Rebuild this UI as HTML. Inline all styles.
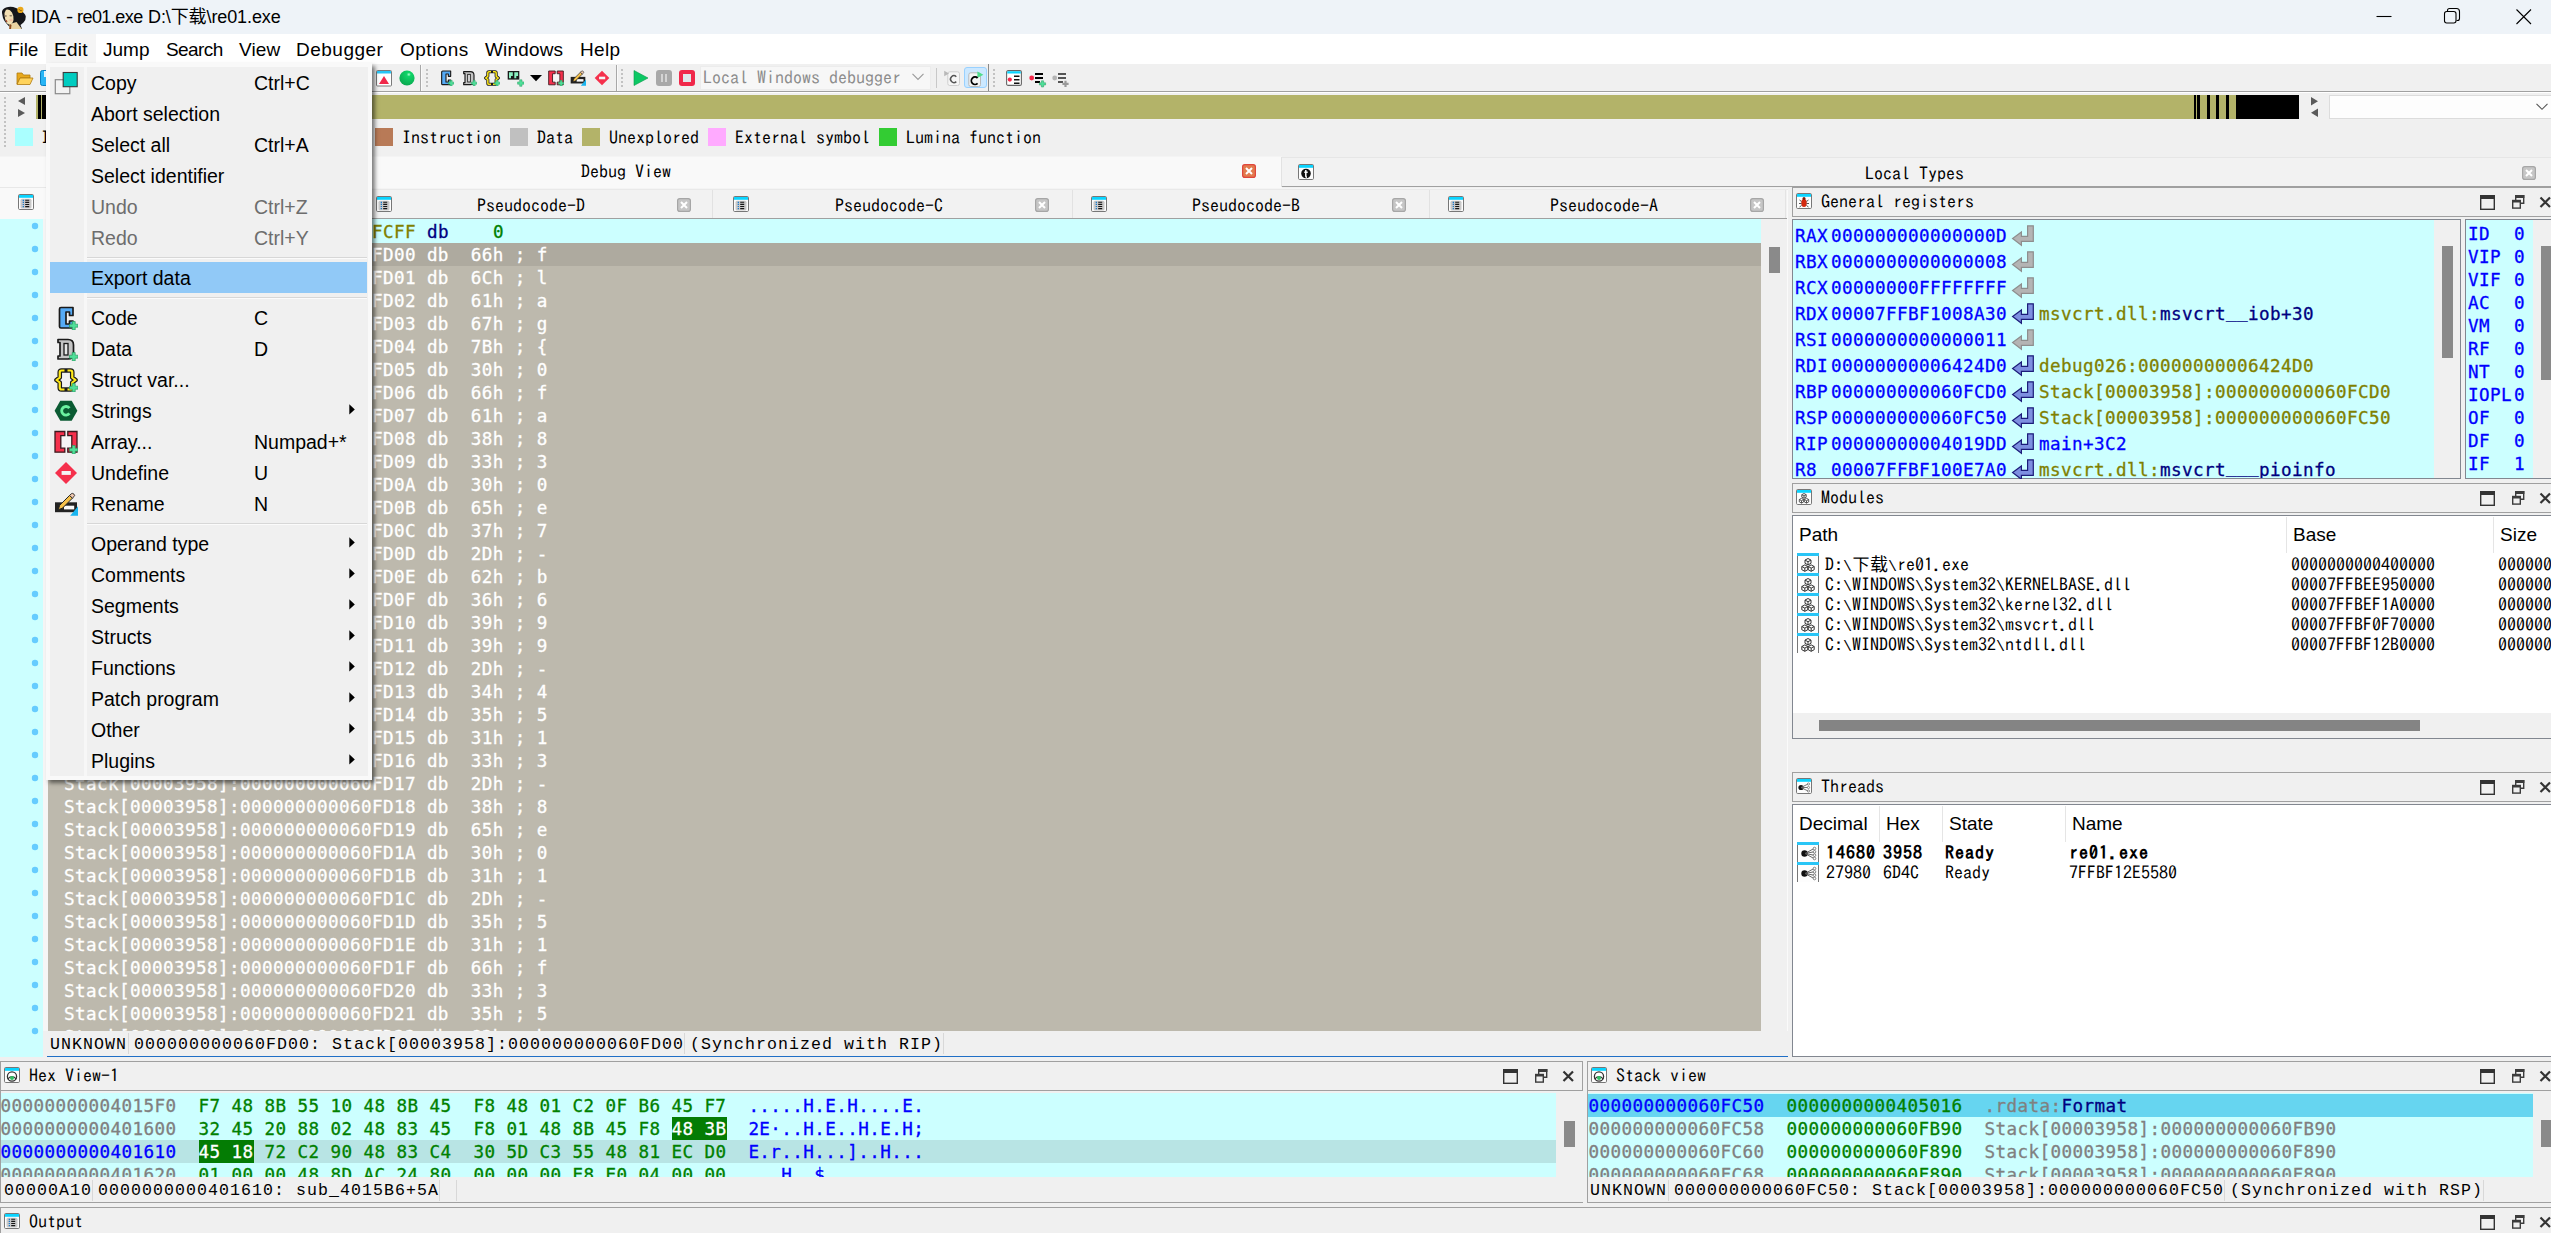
<!DOCTYPE html>
<html lang="zh"><head><meta charset="utf-8"><title>IDA - re01.exe</title>
<style>
html,body{margin:0;padding:0;}
body{width:2551px;height:1233px;overflow:hidden;background:#f0f0f0;position:relative;font-family:"Liberation Sans","Noto Sans CJK SC",sans-serif;}
div,svg{position:absolute;box-sizing:border-box;}
.t{white-space:pre;}
.ui{font-family:"Liberation Sans","Noto Sans CJK SC",sans-serif;color:#000;}
.ss{font-family:"IPAGothic","Liberation Mono","Noto Sans CJK SC",monospace;font-size:18px;line-height:22px;color:#000;}
.ss i{font-style:normal;font-family:"Liberation Mono",monospace;font-size:15px;display:inline-block;width:9px;}
.co{font-family:"DejaVu Sans Mono","Liberation Mono",monospace;font-size:17.6px;letter-spacing:0.404px;line-height:23px;-webkit-text-stroke:0.3px;}
.cr{font-family:"Liberation Mono",monospace;font-size:16.6px;letter-spacing:1.04px;line-height:22px;color:#000;}
</style></head>
<body>
<div style="left:0px;top:0px;width:2551px;height:34px;background:#eef3f8;"></div>
<svg style="left:0px;top:5px;" width="30" height="26" viewBox="0 0 30 26"><path d="M2 8Q1.500 4 6 2.500 11 0.800 16 3 19 4 21 6 25 8 25.800 11.500 26 15 23.500 17.500 21.500 19 20.500 20L22 24H12Q5 18 3 13Z" fill="#15161a"/><path d="M9.500 19L16.500 17 21.800 24H9.200Z" fill="#e9d2a2"/><path d="M9.200 24L9.800 18.500 11.500 20 11 24Z" fill="#8a4a20"/><path d="M6 4.800Q9.500 3.500 12 7.500 14 11 13.500 15 12.500 19.500 9 19.500 6.500 19 5.500 15.500 4.200 11 4.500 8Z" fill="#f1deb2"/><ellipse cx="10.800" cy="10.800" rx="1.500" ry=".8" fill="#8a7a6a"/><ellipse cx="5.800" cy="11" rx="1" ry=".7" fill="#7a6250"/><path d="M5.500 14.500Q7 15 7.500 16.500 6.500 17.500 6 16.500Z" fill="#a8402a"/><ellipse cx="11" cy="15" rx="1.800" ry="1.300" fill="#f0b8a0" opacity=".8"/><circle cx="20.400" cy="4.900" r="3.100" fill="#eaa81c"/><path d="M19 4.200Q20 6.200 21.800 5.600" stroke="#6a4a10" stroke-width=".7" fill="none"/></svg>
<div class="t ui" style="left:31px;top:4.800000000000001px;font-size:18px;line-height:24px;color:#000;letter-spacing:-.2px;">IDA</div>
<div class="t ui" style="left:66px;top:4.800000000000001px;font-size:18px;line-height:24px;color:#000;transform:scaleX(1.2);transform-origin:0 0;">-</div>
<div class="t ui" style="left:77px;top:4.800000000000001px;font-size:18px;line-height:24px;color:#000;letter-spacing:-.55px;">re01.exe</div>
<div class="t ui" style="left:148px;top:4.800000000000001px;font-size:18px;line-height:24px;color:#000;letter-spacing:-.1px;">D:\下载\re01.exe</div>
<svg style="left:2370px;top:4px;" width="170" height="26" viewBox="0 0 170 26"><g stroke="#000" stroke-width="1.1" fill="none"><path d="M6.5 12.5h15"/><rect x="74.5" y="7.5" width="11.5" height="11.5" rx="2.2"/><path d="M77.5 7.5v-1a2 2 0 0 1 2-2h7a3 3 0 0 1 3 3v7a2 2 0 0 1-2 2h-1"/><path d="M146.5 5.5l14.5 14.5M161 5.5l-14.5 14.5"/></g></svg>
<div style="left:0px;top:34px;width:2551px;height:30px;background:#ffffff;"></div>
<div style="left:46px;top:34px;width:50px;height:30px;background:#f5f5f5;"></div>
<div class="t ui" style="left:8px;top:37.5px;font-size:19px;line-height:24px;color:#000;letter-spacing:-0.1px;">File</div>
<div class="t ui" style="left:54px;top:37.5px;font-size:19px;line-height:24px;color:#000;letter-spacing:0.3px;">Edit</div>
<div class="t ui" style="left:103px;top:37.5px;font-size:19px;line-height:24px;color:#000;letter-spacing:0px;">Jump</div>
<div class="t ui" style="left:166px;top:37.5px;font-size:19px;line-height:24px;color:#000;letter-spacing:-0.6px;">Search</div>
<div class="t ui" style="left:239px;top:37.5px;font-size:19px;line-height:24px;color:#000;letter-spacing:0.15px;">View</div>
<div class="t ui" style="left:296px;top:37.5px;font-size:19px;line-height:24px;color:#000;letter-spacing:0.5px;">Debugger</div>
<div class="t ui" style="left:400px;top:37.5px;font-size:19px;line-height:24px;color:#000;letter-spacing:0.45px;">Options</div>
<div class="t ui" style="left:485px;top:37.5px;font-size:19px;line-height:24px;color:#000;letter-spacing:0.17px;">Windows</div>
<div class="t ui" style="left:580px;top:37.5px;font-size:19px;line-height:24px;color:#000;letter-spacing:0.3px;">Help</div>
<div style="left:0px;top:64px;width:2551px;height:28px;background:#f0f0f0;"></div>
<div style="left:0px;top:91px;width:2551px;height:1px;background:#a0a0a0;"></div>
<div style="left:0px;top:92px;width:2551px;height:1px;background:#ffffff;"></div>
<svg style="left:3px;top:68px;" width="4" height="20" viewBox="0 0 4 20"><rect x="1" y="1" width="2" height="2" fill="#c2c2c2"/><rect x="1" y="5" width="2" height="2" fill="#c2c2c2"/><rect x="1" y="9" width="2" height="2" fill="#c2c2c2"/><rect x="1" y="13" width="2" height="2" fill="#c2c2c2"/><rect x="1" y="17" width="2" height="2" fill="#c2c2c2"/></svg>
<svg style="left:425px;top:68px;" width="4" height="20" viewBox="0 0 4 20"><rect x="1" y="1" width="2" height="2" fill="#c2c2c2"/><rect x="1" y="5" width="2" height="2" fill="#c2c2c2"/><rect x="1" y="9" width="2" height="2" fill="#c2c2c2"/><rect x="1" y="13" width="2" height="2" fill="#c2c2c2"/><rect x="1" y="17" width="2" height="2" fill="#c2c2c2"/></svg>
<svg style="left:620px;top:68px;" width="4" height="20" viewBox="0 0 4 20"><rect x="1" y="1" width="2" height="2" fill="#c2c2c2"/><rect x="1" y="5" width="2" height="2" fill="#c2c2c2"/><rect x="1" y="9" width="2" height="2" fill="#c2c2c2"/><rect x="1" y="13" width="2" height="2" fill="#c2c2c2"/><rect x="1" y="17" width="2" height="2" fill="#c2c2c2"/></svg>
<svg style="left:992px;top:68px;" width="4" height="20" viewBox="0 0 4 20"><rect x="1" y="1" width="2" height="2" fill="#c2c2c2"/><rect x="1" y="5" width="2" height="2" fill="#c2c2c2"/><rect x="1" y="9" width="2" height="2" fill="#c2c2c2"/><rect x="1" y="13" width="2" height="2" fill="#c2c2c2"/><rect x="1" y="17" width="2" height="2" fill="#c2c2c2"/></svg>
<div style="left:420px;top:65px;width:1px;height:26px;background:#a8a8a8;"></div>
<div style="left:421px;top:65px;width:1px;height:26px;background:#fafafa;"></div>
<div style="left:616px;top:65px;width:1px;height:26px;background:#a8a8a8;"></div>
<div style="left:617px;top:65px;width:1px;height:26px;background:#fafafa;"></div>
<div style="left:988px;top:64px;width:1px;height:27px;background:#8a8a8a;"></div>
<svg style="left:16px;top:70px;" width="18" height="16" viewBox="0 0 18 16"><path d="M1 3h5l1.5 2H14v3H4L1 14z" fill="#e8a91d" stroke="#b07b10" stroke-width=".8"/><path d="M4 8h13l-3 6.5H1z" fill="#ffd35c" stroke="#b07b10" stroke-width=".8"/></svg>
<svg style="left:40px;top:70px;" width="16" height="16" viewBox="0 0 16 16"><rect x=".5" y=".5" width="15" height="15" rx="2" fill="#29b6f6" stroke="#0b7fc0"/><rect x="4" y="1" width="8" height="6" fill="#e8f6ff"/></svg>
<svg style="left:376px;top:70px;" width="16" height="17" viewBox="0 0 16 17"><rect x=".5" y=".5" width="15" height="15.5" rx="1" fill="#fff" stroke="#7a7a7a"/><rect x="1" y="1" width="14" height="2.5" fill="#29c5f6"/><path d="M8 6l5 8H3z" fill="#f0284a"/></svg>
<svg style="left:399px;top:70px;" width="16" height="16" viewBox="0 0 16 16"><defs><radialGradient id="gb" cx=".62" cy=".27" r=".75"><stop offset="0" stop-color="#b0ffd0"/><stop offset=".18" stop-color="#10d468"/><stop offset="1" stop-color="#0aa850"/></radialGradient></defs><circle cx="8" cy="8" r="7.6" fill="url(#gb)"/></svg>
<svg style="left:438px;top:70.1px;" width="16" height="16" viewBox="0 0 24 24"><path d="M7 1.500H19V9.500H15.500V6H12V18H15.500V15H19V22H7Q5.500 22 5.500 20.500V3Q5.500 1.500 7 1.500Z" fill="#55aaf5" stroke="#1a1a1a" stroke-width="1.700" stroke-linejoin="round"/><path d="M18.2 15.500h3v2.700h2.700v3h-2.700v2.700h-3v-2.700h-2.700v-3h2.700z" fill="#4fe09a" stroke="#2a9a60" stroke-width=".7"/></svg>
<svg style="left:460.7px;top:70.1px;" width="16" height="16" viewBox="0 0 24 24"><path d="M4 2.500H14Q19.500 2.500 19.500 8V16.500Q19.500 22 14 22H4V19H6V5.500H4Z" fill="#c4c4c4" stroke="#1a1a1a" stroke-width="1.700" stroke-linejoin="round"/><rect x="10" y="6.500" width="4" height="11.500" fill="#e6e6e6" stroke="#1a1a1a" stroke-width="1.300"/><path d="M18.2 15.500h3v2.700h2.700v3h-2.700v2.700h-3v-2.700h-2.700v-3h2.700z" fill="#4fe09a" stroke="#2a9a60" stroke-width=".7"/></svg>
<svg style="left:483.6px;top:70.1px;" width="16" height="16" viewBox="0 0 24 24"><g fill="none" stroke-linejoin="round"><path id="sb" d="M10.500 2.500H7.500Q5.750 2.500 5.750 4.200V9.500L2.500 12 5.750 14.500V19.800Q5.750 21.500 7.500 21.500H10.500M13.500 2.500H16.500Q18.250 2.500 18.250 4.200V9.500L21.500 12 18.250 14.500V19.800Q18.250 21.500 16.500 21.500H13.500" stroke="#1a1a1a" stroke-width="4.600" stroke-linecap="square"/><path d="M10.500 2.500H7.500Q5.750 2.500 5.750 4.200V9.500L2.500 12 5.750 14.500V19.800Q5.750 21.500 7.500 21.500H10.500M13.500 2.500H16.500Q18.250 2.500 18.250 4.200V9.500L21.500 12 18.250 14.500V19.800Q18.250 21.500 16.500 21.500H13.500" stroke="#ffe81a" stroke-width="2.200"/></g><path d="M18.2 15.500h3v2.700h2.700v3h-2.700v2.700h-3v-2.700h-2.700v-3h2.700z" fill="#4fe09a" stroke="#2a9a60" stroke-width=".7"/></svg>
<svg style="left:507px;top:70px;" width="17" height="17" viewBox="0 0 17 17"><rect x=".7" y="1" width="11.600" height="8.600" fill="#1a1a1a"/><path d="M2 2.300h3.800v3.700H4v2.200H2zM7.300 2.300h3.800v3.700H9.300v2.200H7.300z" fill="#8af0c0"/><path d="M12.700 9.800h2.300v2.100h2.100v2.300h-2.100v2.100h-2.300v-2.100h-2.100v-2.300h2.100z" fill="#4fe09a" stroke="#2a9a60" stroke-width=".5"/></svg>
<svg style="left:529.5px;top:75px;" width="12" height="7" viewBox="0 0 12 7"><path d="M0 0h12L6 6.200z" fill="#000"/></svg>
<svg style="left:547.9px;top:70.1px;" width="16" height="16" viewBox="0 0 24 24"><rect x="6.800" y="5.600" width="11" height="12.600" fill="#f6f6f6"/><path d="M1 1.500H10.800V5.600H6.800V18.200H10.800V22.200H1ZM23 1.500H13.800V5.600H17.800V18.200H13.800V22.200H23Z" fill="#f5304c" stroke="#3a1a1e" stroke-width="1.300"/><path d="M18.2 15.500h3v2.700h2.700v3h-2.700v2.700h-3v-2.700h-2.700v-3h2.700z" fill="#4fe09a" stroke="#2a9a60" stroke-width=".7"/></svg>
<svg style="left:570.3px;top:69.6px;" width="16" height="16" viewBox="0 0 24 24"><rect x="1" y="10.300" width="22" height="9.900" fill="#222"/><rect x="10" y="13.700" width="10.200" height="3.700" fill="#fafafa"/><path d="M24 14.300V23.700H16.200Z" fill="#19b5f0"/><path d="M4.300 17.700L5.600 13.400 15.600 3.400 18.400 6.200 8.400 16.200Z" fill="#f5c04a" stroke="#222" stroke-width="1"/><path d="M15.600 3.400L17.200 1.800Q18.700 .8 20 2.200 21.300 3.600 20 4.600L18.400 6.200Z" fill="#f0c8b0" stroke="#222" stroke-width=".9"/></svg>
<svg style="left:594.1px;top:70.1px;" width="16" height="16" viewBox="0 0 24 24"><path d="M12 1L23 12 12 23 1 12Z" fill="#f5304c"/><rect x="7.600" y="10" width="9.200" height="3.900" fill="#f4f4f4"/></svg>
<svg style="left:633px;top:70px;" width="16" height="17" viewBox="0 0 16 17"><path d="M1 .5L15 8 1 15.500z" fill="#0cc864" stroke="#0a9a4c" stroke-width=".6"/></svg>
<svg style="left:656px;top:70px;" width="16" height="16" viewBox="0 0 16 16"><rect x="0" y="0" width="16" height="16" rx="3" fill="#a8a8a8"/><rect x="5" y="4" width="2" height="8" fill="#d4d4d4"/><rect x="9" y="4" width="2" height="8" fill="#d4d4d4"/></svg>
<svg style="left:679px;top:70px;" width="16" height="16" viewBox="0 0 16 16"><rect x="0" y="0" width="16" height="16" rx="3" fill="#f0284a"/><rect x="4" y="4" width="8" height="8" fill="#dfe7ea"/></svg>
<div style="left:700px;top:66px;width:231px;height:24px;background:#f7f7f7;border:1px solid #ececec;"></div>
<div class="t ss" style="left:703px;top:66px;color:#8c8c8c;">Local Windows debugger</div>
<svg style="left:912px;top:73px;" width="12" height="8" viewBox="0 0 12 8"><path d="M.5 .8L6 6.500 11.500 .8" fill="none" stroke="#9a9a9a" stroke-width="1.100"/></svg>
<div style="left:936px;top:68px;width:1px;height:20px;background:#c8c8c8;"></div>
<svg style="left:943px;top:70px;" width="18" height="17" viewBox="0 0 18 17"><rect x="4.800" y="1.800" width="11.700" height="13.700" rx="2" fill="#f6f6f6" stroke="#cfcfcf"/><path d="M1.200 .8l4.800 2.700-4.800 2.700z" fill="#b8b8b8"/><path d="M13.300 6.700A3.400 3.400 0 1 0 13.300 11.600" fill="none" stroke="#555" stroke-width="1.500"/></svg>
<div style="left:964px;top:67px;width:23px;height:21px;background:#cce8ff;border:1px solid #99d1ff;border-radius:3px;"></div>
<svg style="left:967px;top:70px;" width="18" height="17" viewBox="0 0 18 17"><rect x="1.800" y="2.800" width="11.700" height="13.700" rx="2" fill="#f4f4f4" stroke="#b8b8b8"/><path d="M10.400 1.500l6 3.200-6 3.300z" fill="#4fdd8c"/><path d="M10.600 8A3.700 3.700 0 1 0 10.600 13.400" fill="none" stroke="#000" stroke-width="1.800"/></svg>
<svg style="left:1006px;top:70px;" width="16" height="16" viewBox="0 0 16 16"><rect x=".6" y=".6" width="14.800" height="14.800" rx="1.500" fill="#fff" stroke="#666" stroke-width="1.100"/><path d="M1.200 3.600V2Q1.200 1.200 2 1.200H14Q14.800 1.200 14.800 2V3.600Z" fill="#0ad4ff"/><circle cx="3.800" cy="9.600" r="2.100" fill="#f5284a"/><path d="M8 6.300h5.500M8 9.800h5.500M8 13.200h5.500" stroke="#111" stroke-width="1.600"/></svg>
<svg style="left:1029px;top:70px;" width="18" height="18" viewBox="0 0 18 18"><circle cx="2.700" cy="8" r="2.400" fill="#f5284a"/><path d="M6 4h8M6 8h8M6 12h5" stroke="#000" stroke-width="1.800"/><path d="M12.400 10.800h2.200v2h2v2.200h-2v2h-2.200v-2h-2v-2.200h2z" fill="#4fe09a" stroke="#2a9a60" stroke-width=".5"/></svg>
<svg style="left:1052px;top:70px;" width="18" height="18" viewBox="0 0 18 18"><circle cx="2.700" cy="8" r="2.400" fill="#b4b4b4"/><path d="M6 4h8M6 8h8M6 12h5" stroke="#555" stroke-width="1.800"/><path d="M12.400 10.800h2.200v2h2v2.200h-2v2h-2.200v-2h-2v-2.200h2z" fill="#9a9a9a"/></svg>
<svg style="left:3px;top:96px;" width="4" height="52" viewBox="0 0 4 52"><rect x="1" y="1" width="2" height="2" fill="#c2c2c2"/><rect x="1" y="5" width="2" height="2" fill="#c2c2c2"/><rect x="1" y="9" width="2" height="2" fill="#c2c2c2"/><rect x="1" y="13" width="2" height="2" fill="#c2c2c2"/><rect x="1" y="17" width="2" height="2" fill="#c2c2c2"/><rect x="1" y="21" width="2" height="2" fill="#c2c2c2"/><rect x="1" y="25" width="2" height="2" fill="#c2c2c2"/><rect x="1" y="29" width="2" height="2" fill="#c2c2c2"/><rect x="1" y="33" width="2" height="2" fill="#c2c2c2"/><rect x="1" y="37" width="2" height="2" fill="#c2c2c2"/><rect x="1" y="41" width="2" height="2" fill="#c2c2c2"/><rect x="1" y="45" width="2" height="2" fill="#c2c2c2"/><rect x="1" y="49" width="2" height="2" fill="#c2c2c2"/></svg>
<svg style="left:17px;top:96px;" width="10" height="23" viewBox="0 0 10 23"><path d="M8 1v8L1 5zM1 13v8l7-4z" fill="#5a5a5a"/></svg>
<div style="left:36px;top:95px;width:2263px;height:24px;background:#b3b369;"></div>
<div style="left:38px;top:95px;width:3px;height:24px;background:#000;"></div>
<div style="left:42px;top:95px;width:4px;height:24px;background:#000;"></div>
<div style="left:2194px;top:95px;width:2px;height:24px;background:#000;"></div>
<div style="left:2197px;top:95px;width:3px;height:24px;background:#000;"></div>
<div style="left:2207px;top:95px;width:3px;height:24px;background:#000;"></div>
<div style="left:2216px;top:95px;width:3px;height:24px;background:#000;"></div>
<div style="left:2226px;top:95px;width:3px;height:24px;background:#000;"></div>
<div style="left:2236px;top:95px;width:63px;height:24px;background:#000;"></div>
<svg style="left:2310px;top:96px;" width="9" height="23" viewBox="0 0 9 23"><path d="M1 1v8.500L8 5.200zM8 12.500V21L1 16.700z" fill="#5a5a5a"/></svg>
<div style="left:2329px;top:95px;width:230px;height:24px;background:#fdfdfd;border:1px solid #dcdcdc;"></div>
<svg style="left:2536px;top:103px;" width="12" height="8" viewBox="0 0 12 8"><path d="M.5 .8L6 6.300 11.500 .8" fill="none" stroke="#555" stroke-width="1.100"/></svg>
<div style="left:15px;top:128px;width:18px;height:18px;background:#aaffff;"></div>
<div class="t ss" style="left:41px;top:126px;">I</div>
<div style="left:375px;top:128px;width:18px;height:18px;background:#b87a57;"></div>
<div class="t ss" style="left:402px;top:126px;">Instruction</div>
<div style="left:510px;top:128px;width:18px;height:18px;background:#c0c0c0;"></div>
<div class="t ss" style="left:537px;top:126px;">Data</div>
<div style="left:582px;top:128px;width:18px;height:18px;background:#b3b369;"></div>
<div class="t ss" style="left:609px;top:126px;">Unexplored</div>
<div style="left:708px;top:128px;width:18px;height:18px;background:#ffaaff;"></div>
<div class="t ss" style="left:735px;top:126px;">External symbol</div>
<div style="left:879px;top:128px;width:18px;height:18px;background:#33cc33;"></div>
<div class="t ss" style="left:906px;top:126px;">Lumina function</div>
<div style="left:0px;top:156px;width:1282px;height:32px;background:#f9f9f9;"></div>
<div style="left:0px;top:156px;width:1282px;height:1px;background:#f4f4f4;"></div>
<div style="left:1282px;top:158px;width:1269px;height:28px;background:#f2f2f2;"></div>
<div style="left:1282px;top:157px;width:1269px;height:1px;background:#e6e6e6;"></div>
<div style="left:1282px;top:186px;width:1269px;height:1px;background:#a0a0a0;"></div>
<div style="left:1281px;top:157px;width:1px;height:30px;background:#e2e2e2;"></div>
<div class="t ss" style="left:581px;top:160px;">Debug View</div>
<svg style="left:1242px;top:164px;" width="14" height="14" viewBox="0 0 14 14"><rect x=".6" y=".6" width="12.800" height="12.800" rx="2.200" fill="#e27b4e" stroke="#e0463c" stroke-width="1.200"/><path d="M4 4l6 6M10 4l-6 6" stroke="#fff" stroke-width="2"/></svg>
<svg style="left:1298px;top:164px;" width="16" height="16" viewBox="0 0 16 16"><rect x=".5" y=".5" width="15" height="15" rx="1.200" fill="#fdfdfd" stroke="#777"/><path d="M1 3.800V1H15V3.800Z" fill="#0ad4ff"/><circle cx="8" cy="9.500" r="4.800" fill="#111"/><path d="M7.800 6v6.300q0 .9 1.200 .9M6.300 8.200h3.400" stroke="#fff" stroke-width="1.500" fill="none"/></svg>
<div class="t ss" style="left:1865px;top:162px;">Local Types</div>
<svg style="left:2522px;top:166px;" width="14" height="14" viewBox="0 0 14 14"><rect x=".6" y=".6" width="12.800" height="12.800" rx="2.200" fill="#c6c6c6" stroke="#a6a6a6" stroke-width="1.200"/><path d="M4 4l6 6M10 4l-6 6" stroke="#fff" stroke-width="2"/></svg>
<div style="left:0px;top:188px;width:1788px;height:2px;background:#f4f4f4;"></div>
<div style="left:0px;top:189px;width:1788px;height:1px;background:#e9e9e9;"></div>
<div style="left:0px;top:190px;width:1788px;height:28px;background:#f2f2f2;"></div>
<div style="left:0px;top:218px;width:1788px;height:1px;background:#a0a0a0;"></div>
<div style="left:0px;top:188px;width:355px;height:31px;background:#f9f9f9;"></div>
<div style="left:0px;top:187px;width:355px;height:1px;background:#e8e8e8;"></div>
<svg style="left:18px;top:194px;" width="16" height="16" viewBox="0 0 16 16"><rect x=".5" y=".5" width="15" height="15" rx="1.200" fill="#fdfdfd" stroke="#777"/><path d="M1 3.800V1H15V3.800Z" fill="#0ad4ff"/><rect x="2.500" y="4.800" width="11" height="9.700" rx="1.500" fill="#c9c9c9"/><path d="M7.200 6.300h4M7.200 8.400h4M7.200 10.500h4M7.200 12.600h4" stroke="#161616" stroke-width="1.100"/><path d="M4.700 6.300h1.300M4.700 8.400h1.300M4.700 10.500h1.300M4.700 12.600h1.300" stroke="#1a7acc" stroke-width="1.200"/></svg>
<div style="left:355px;top:190px;width:1px;height:28px;background:#e2e2e2;"></div>
<svg style="left:376px;top:196px;" width="16" height="16" viewBox="0 0 16 16"><rect x=".5" y=".5" width="15" height="15" rx="1.200" fill="#fdfdfd" stroke="#777"/><path d="M1 3.800V1H15V3.800Z" fill="#0ad4ff"/><rect x="2.500" y="4.800" width="11" height="9.700" rx="1.500" fill="#c9c9c9"/><path d="M7.200 6.300h4M7.200 8.400h4M7.200 10.500h4M7.200 12.600h4" stroke="#161616" stroke-width="1.100"/><path d="M4.700 6.300h1.300M4.700 8.400h1.300M4.700 10.500h1.300M4.700 12.600h1.300" stroke="#1a7acc" stroke-width="1.200"/></svg>
<div class="t ss" style="left:477px;top:194px;">Pseudocode-D</div>
<svg style="left:677px;top:198px;" width="14" height="14" viewBox="0 0 14 14"><rect x=".6" y=".6" width="12.800" height="12.800" rx="2.200" fill="#c6c6c6" stroke="#a6a6a6" stroke-width="1.200"/><path d="M4 4l6 6M10 4l-6 6" stroke="#fff" stroke-width="2"/></svg>
<div style="left:712px;top:190px;width:1px;height:28px;background:#e2e2e2;"></div>
<svg style="left:733px;top:196px;" width="16" height="16" viewBox="0 0 16 16"><rect x=".5" y=".5" width="15" height="15" rx="1.200" fill="#fdfdfd" stroke="#777"/><path d="M1 3.800V1H15V3.800Z" fill="#0ad4ff"/><rect x="2.500" y="4.800" width="11" height="9.700" rx="1.500" fill="#c9c9c9"/><path d="M7.200 6.300h4M7.200 8.400h4M7.200 10.500h4M7.200 12.600h4" stroke="#161616" stroke-width="1.100"/><path d="M4.700 6.300h1.300M4.700 8.400h1.300M4.700 10.500h1.300M4.700 12.600h1.300" stroke="#1a7acc" stroke-width="1.200"/></svg>
<div class="t ss" style="left:835px;top:194px;">Pseudocode-C</div>
<svg style="left:1035px;top:198px;" width="14" height="14" viewBox="0 0 14 14"><rect x=".6" y=".6" width="12.800" height="12.800" rx="2.200" fill="#c6c6c6" stroke="#a6a6a6" stroke-width="1.200"/><path d="M4 4l6 6M10 4l-6 6" stroke="#fff" stroke-width="2"/></svg>
<div style="left:1072px;top:190px;width:1px;height:28px;background:#e2e2e2;"></div>
<svg style="left:1091px;top:196px;" width="16" height="16" viewBox="0 0 16 16"><rect x=".5" y=".5" width="15" height="15" rx="1.200" fill="#fdfdfd" stroke="#777"/><path d="M1 3.800V1H15V3.800Z" fill="#0ad4ff"/><rect x="2.500" y="4.800" width="11" height="9.700" rx="1.500" fill="#c9c9c9"/><path d="M7.200 6.300h4M7.200 8.400h4M7.200 10.500h4M7.200 12.600h4" stroke="#161616" stroke-width="1.100"/><path d="M4.700 6.300h1.300M4.700 8.400h1.300M4.700 10.500h1.300M4.700 12.600h1.300" stroke="#1a7acc" stroke-width="1.200"/></svg>
<div class="t ss" style="left:1192px;top:194px;">Pseudocode-B</div>
<svg style="left:1392px;top:198px;" width="14" height="14" viewBox="0 0 14 14"><rect x=".6" y=".6" width="12.800" height="12.800" rx="2.200" fill="#c6c6c6" stroke="#a6a6a6" stroke-width="1.200"/><path d="M4 4l6 6M10 4l-6 6" stroke="#fff" stroke-width="2"/></svg>
<div style="left:1429px;top:190px;width:1px;height:28px;background:#e2e2e2;"></div>
<svg style="left:1448px;top:196px;" width="16" height="16" viewBox="0 0 16 16"><rect x=".5" y=".5" width="15" height="15" rx="1.200" fill="#fdfdfd" stroke="#777"/><path d="M1 3.800V1H15V3.800Z" fill="#0ad4ff"/><rect x="2.500" y="4.800" width="11" height="9.700" rx="1.500" fill="#c9c9c9"/><path d="M7.200 6.300h4M7.200 8.400h4M7.200 10.500h4M7.200 12.600h4" stroke="#161616" stroke-width="1.100"/><path d="M4.700 6.300h1.300M4.700 8.400h1.300M4.700 10.500h1.300M4.700 12.600h1.300" stroke="#1a7acc" stroke-width="1.200"/></svg>
<div class="t ss" style="left:1550px;top:194px;">Pseudocode-A</div>
<svg style="left:1750px;top:198px;" width="14" height="14" viewBox="0 0 14 14"><rect x=".6" y=".6" width="12.800" height="12.800" rx="2.200" fill="#c6c6c6" stroke="#a6a6a6" stroke-width="1.200"/><path d="M4 4l6 6M10 4l-6 6" stroke="#fff" stroke-width="2"/></svg>
<div style="left:1785px;top:190px;width:1px;height:28px;background:#e4e4e4;"></div>
<div style="left:0px;top:219px;width:43px;height:838px;background:#ccffff;"></div>
<div style="left:43px;top:219px;width:5px;height:812px;background:#f6f6f6;"></div>
<div style="left:48px;top:219px;width:1713px;height:24px;background:#ccffff;"></div>
<div style="left:48px;top:243px;width:1713px;height:23px;background:#aeaa9f;"></div>
<div style="left:48px;top:266px;width:1713px;height:765px;background:#bdb9ad;"></div>
<div style="left:1761px;top:219px;width:27px;height:812px;background:#f0f0f0;"></div>
<div style="left:1787px;top:190px;width:1px;height:866px;background:#fafafa;"></div>
<div style="left:1769px;top:247px;width:11px;height:26px;background:#8a8a8a;"></div>
<svg style="left:31px;top:218px;" width="8" height="838" viewBox="0 0 8 838"><circle cx="4" cy="8" r="3.200" fill="#66ccff"/><circle cx="4" cy="31" r="3.200" fill="#66ccff"/><circle cx="4" cy="54" r="3.200" fill="#66ccff"/><circle cx="4" cy="77" r="3.200" fill="#66ccff"/><circle cx="4" cy="100" r="3.200" fill="#66ccff"/><circle cx="4" cy="123" r="3.200" fill="#66ccff"/><circle cx="4" cy="146" r="3.200" fill="#66ccff"/><circle cx="4" cy="169" r="3.200" fill="#66ccff"/><circle cx="4" cy="192" r="3.200" fill="#66ccff"/><circle cx="4" cy="215" r="3.200" fill="#66ccff"/><circle cx="4" cy="238" r="3.200" fill="#66ccff"/><circle cx="4" cy="261" r="3.200" fill="#66ccff"/><circle cx="4" cy="284" r="3.200" fill="#66ccff"/><circle cx="4" cy="307" r="3.200" fill="#66ccff"/><circle cx="4" cy="330" r="3.200" fill="#66ccff"/><circle cx="4" cy="353" r="3.200" fill="#66ccff"/><circle cx="4" cy="376" r="3.200" fill="#66ccff"/><circle cx="4" cy="399" r="3.200" fill="#66ccff"/><circle cx="4" cy="422" r="3.200" fill="#66ccff"/><circle cx="4" cy="445" r="3.200" fill="#66ccff"/><circle cx="4" cy="468" r="3.200" fill="#66ccff"/><circle cx="4" cy="491" r="3.200" fill="#66ccff"/><circle cx="4" cy="514" r="3.200" fill="#66ccff"/><circle cx="4" cy="537" r="3.200" fill="#66ccff"/><circle cx="4" cy="560" r="3.200" fill="#66ccff"/><circle cx="4" cy="583" r="3.200" fill="#66ccff"/><circle cx="4" cy="606" r="3.200" fill="#66ccff"/><circle cx="4" cy="629" r="3.200" fill="#66ccff"/><circle cx="4" cy="652" r="3.200" fill="#66ccff"/><circle cx="4" cy="675" r="3.200" fill="#66ccff"/><circle cx="4" cy="698" r="3.200" fill="#66ccff"/><circle cx="4" cy="721" r="3.200" fill="#66ccff"/><circle cx="4" cy="744" r="3.200" fill="#66ccff"/><circle cx="4" cy="767" r="3.200" fill="#66ccff"/><circle cx="4" cy="790" r="3.200" fill="#66ccff"/><circle cx="4" cy="813" r="3.200" fill="#66ccff"/></svg>
<div class="t co" style="left:64px;top:221px;"><span style="color:#808000">Stack[00003958]:000000000060FCFF</span> <span style="color:#000080">db</span>    <span style="color:#008000">0</span></div>
<div class="t co" style="left:64px;top:244px;height:23px;overflow:hidden;color:#ffffff;">Stack[00003958]:000000000060FD00 db  66h ; f</div>
<div class="t co" style="left:64px;top:267px;height:23px;overflow:hidden;color:#ffffff;">Stack[00003958]:000000000060FD01 db  6Ch ; l</div>
<div class="t co" style="left:64px;top:290px;height:23px;overflow:hidden;color:#ffffff;">Stack[00003958]:000000000060FD02 db  61h ; a</div>
<div class="t co" style="left:64px;top:313px;height:23px;overflow:hidden;color:#ffffff;">Stack[00003958]:000000000060FD03 db  67h ; g</div>
<div class="t co" style="left:64px;top:336px;height:23px;overflow:hidden;color:#ffffff;">Stack[00003958]:000000000060FD04 db  7Bh ; {</div>
<div class="t co" style="left:64px;top:359px;height:23px;overflow:hidden;color:#ffffff;">Stack[00003958]:000000000060FD05 db  30h ; 0</div>
<div class="t co" style="left:64px;top:382px;height:23px;overflow:hidden;color:#ffffff;">Stack[00003958]:000000000060FD06 db  66h ; f</div>
<div class="t co" style="left:64px;top:405px;height:23px;overflow:hidden;color:#ffffff;">Stack[00003958]:000000000060FD07 db  61h ; a</div>
<div class="t co" style="left:64px;top:428px;height:23px;overflow:hidden;color:#ffffff;">Stack[00003958]:000000000060FD08 db  38h ; 8</div>
<div class="t co" style="left:64px;top:451px;height:23px;overflow:hidden;color:#ffffff;">Stack[00003958]:000000000060FD09 db  33h ; 3</div>
<div class="t co" style="left:64px;top:474px;height:23px;overflow:hidden;color:#ffffff;">Stack[00003958]:000000000060FD0A db  30h ; 0</div>
<div class="t co" style="left:64px;top:497px;height:23px;overflow:hidden;color:#ffffff;">Stack[00003958]:000000000060FD0B db  65h ; e</div>
<div class="t co" style="left:64px;top:520px;height:23px;overflow:hidden;color:#ffffff;">Stack[00003958]:000000000060FD0C db  37h ; 7</div>
<div class="t co" style="left:64px;top:543px;height:23px;overflow:hidden;color:#ffffff;">Stack[00003958]:000000000060FD0D db  2Dh ; -</div>
<div class="t co" style="left:64px;top:566px;height:23px;overflow:hidden;color:#ffffff;">Stack[00003958]:000000000060FD0E db  62h ; b</div>
<div class="t co" style="left:64px;top:589px;height:23px;overflow:hidden;color:#ffffff;">Stack[00003958]:000000000060FD0F db  36h ; 6</div>
<div class="t co" style="left:64px;top:612px;height:23px;overflow:hidden;color:#ffffff;">Stack[00003958]:000000000060FD10 db  39h ; 9</div>
<div class="t co" style="left:64px;top:635px;height:23px;overflow:hidden;color:#ffffff;">Stack[00003958]:000000000060FD11 db  39h ; 9</div>
<div class="t co" style="left:64px;top:658px;height:23px;overflow:hidden;color:#ffffff;">Stack[00003958]:000000000060FD12 db  2Dh ; -</div>
<div class="t co" style="left:64px;top:681px;height:23px;overflow:hidden;color:#ffffff;">Stack[00003958]:000000000060FD13 db  34h ; 4</div>
<div class="t co" style="left:64px;top:704px;height:23px;overflow:hidden;color:#ffffff;">Stack[00003958]:000000000060FD14 db  35h ; 5</div>
<div class="t co" style="left:64px;top:727px;height:23px;overflow:hidden;color:#ffffff;">Stack[00003958]:000000000060FD15 db  31h ; 1</div>
<div class="t co" style="left:64px;top:750px;height:23px;overflow:hidden;color:#ffffff;">Stack[00003958]:000000000060FD16 db  33h ; 3</div>
<div class="t co" style="left:64px;top:773px;height:23px;overflow:hidden;color:#ffffff;">Stack[00003958]:000000000060FD17 db  2Dh ; -</div>
<div class="t co" style="left:64px;top:796px;height:23px;overflow:hidden;color:#ffffff;">Stack[00003958]:000000000060FD18 db  38h ; 8</div>
<div class="t co" style="left:64px;top:819px;height:23px;overflow:hidden;color:#ffffff;">Stack[00003958]:000000000060FD19 db  65h ; e</div>
<div class="t co" style="left:64px;top:842px;height:23px;overflow:hidden;color:#ffffff;">Stack[00003958]:000000000060FD1A db  30h ; 0</div>
<div class="t co" style="left:64px;top:865px;height:23px;overflow:hidden;color:#ffffff;">Stack[00003958]:000000000060FD1B db  31h ; 1</div>
<div class="t co" style="left:64px;top:888px;height:23px;overflow:hidden;color:#ffffff;">Stack[00003958]:000000000060FD1C db  2Dh ; -</div>
<div class="t co" style="left:64px;top:911px;height:23px;overflow:hidden;color:#ffffff;">Stack[00003958]:000000000060FD1D db  35h ; 5</div>
<div class="t co" style="left:64px;top:934px;height:23px;overflow:hidden;color:#ffffff;">Stack[00003958]:000000000060FD1E db  31h ; 1</div>
<div class="t co" style="left:64px;top:957px;height:23px;overflow:hidden;color:#ffffff;">Stack[00003958]:000000000060FD1F db  66h ; f</div>
<div class="t co" style="left:64px;top:980px;height:23px;overflow:hidden;color:#ffffff;">Stack[00003958]:000000000060FD20 db  33h ; 3</div>
<div class="t co" style="left:64px;top:1003px;height:23px;overflow:hidden;color:#ffffff;">Stack[00003958]:000000000060FD21 db  35h ; 5</div>
<div class="t co" style="left:64px;top:1026px;height:5px;overflow:hidden;color:#ffffff;">Stack[00003958]:000000000060FD22 db  62h ; b</div>
<div style="left:48px;top:1031px;width:1740px;height:25px;background:#f0f0f0;"></div>
<div style="left:47px;top:1056px;width:1741px;height:1px;background:#1f6fc6;"></div>
<div class="t cr" style="left:50px;top:1034px;">UNKNOWN</div>
<div style="left:128px;top:1033px;width:1px;height:21px;background:#d8d8d8;"></div>
<div class="t cr" style="left:134px;top:1034px;">000000000060FD00: Stack[00003958]:000000000060FD00</div>
<div style="left:684px;top:1033px;width:1px;height:21px;background:#d8d8d8;"></div>
<div class="t cr" style="left:690px;top:1034px;">(Synchronized with RIP)</div>
<div style="left:943px;top:1033px;width:1px;height:21px;background:#d8d8d8;"></div>
<div style="left:1792px;top:187px;width:770px;height:30px;background:#f0f0f0;border:1px solid #a0a0a0;"></div>
<svg style="left:1796px;top:193px;" width="16" height="16" viewBox="0 0 16 16"><rect x=".5" y=".5" width="15" height="15" rx="1.200" fill="#fdfdfd" stroke="#777"/><path d="M1 3.800V1H15V3.800Z" fill="#0ad4ff"/><ellipse cx="8" cy="10" rx="2.800" ry="4" fill="#d42a10"/><circle cx="8" cy="5.600" r="1.500" fill="#7a1a08"/><path d="M3.500 7l2 1.500M12.500 7l-2 1.500M3 10.500h2.500M13 10.500h-2.500M3.500 14l2-1.500M12.500 14l-2-1.500" stroke="#555" stroke-width="1"/></svg>
<div class="t ss" style="left:1821px;top:190px;">General registers</div>
<svg style="left:2480px;top:195px;" width="72" height="16" viewBox="0 0 72 16"><rect x=".7" y=".7" width="13.600" height="13.600" fill="none" stroke="#333" stroke-width="1.400"/><rect x="0" y="0" width="15" height="4" fill="#333"/>
<g fill="none" stroke="#3c3c3c" stroke-width="1.400"><path d="M35.700 5V.7h8v7.600h-3"/><rect x="32.700" y="5.500" width="7.600" height="7.600" fill="#f0f0f0"/></g><path d="M35 0h9.400v3H35zM32 5h9v2.600h-9z" fill="#3c3c3c"/>
<path d="M60.500 2.500l9.500 9.500M70 2.500l-9.500 9.500" stroke="#333" stroke-width="2.200"/></svg>
<div style="left:1792px;top:219px;width:669px;height:260px;background:#ccffff;border:1px solid #828790;"></div>
<div style="left:2434px;top:220px;width:26px;height:258px;background:#f0f0f0;"></div>
<div style="left:2442px;top:246px;width:11px;height:112px;background:#8a8a8a;"></div>
<div class="t co" style="left:1795px;top:224.5px;color:#0000ff;height:24px;overflow:hidden">RAX</div>
<div class="t co" style="left:1831px;top:224.5px;color:#0000ff;height:24px;overflow:hidden">000000000000000D</div>
<svg style="left:2011px;top:223.5px;" width="24" height="24" viewBox="0 0 24 24"><path d="M16.600 1.800H22.300V17.400H10.400V21.200L1.600 14.500 10.400 8V12.400H16.600Z" fill="#b4b4b4" stroke="#8e8e8e" stroke-width="1.200" stroke-linejoin="miter"/></svg>
<div class="t co" style="left:1795px;top:250.5px;color:#0000ff;height:24px;overflow:hidden">RBX</div>
<div class="t co" style="left:1831px;top:250.5px;color:#0000ff;height:24px;overflow:hidden">0000000000000008</div>
<svg style="left:2011px;top:249.5px;" width="24" height="24" viewBox="0 0 24 24"><path d="M16.600 1.800H22.300V17.400H10.400V21.200L1.600 14.500 10.400 8V12.400H16.600Z" fill="#b4b4b4" stroke="#8e8e8e" stroke-width="1.200" stroke-linejoin="miter"/></svg>
<div class="t co" style="left:1795px;top:276.5px;color:#0000ff;height:24px;overflow:hidden">RCX</div>
<div class="t co" style="left:1831px;top:276.5px;color:#0000ff;height:24px;overflow:hidden">00000000FFFFFFFF</div>
<svg style="left:2011px;top:275.5px;" width="24" height="24" viewBox="0 0 24 24"><path d="M16.600 1.800H22.300V17.400H10.400V21.200L1.600 14.500 10.400 8V12.400H16.600Z" fill="#b4b4b4" stroke="#8e8e8e" stroke-width="1.200" stroke-linejoin="miter"/></svg>
<div class="t co" style="left:1795px;top:302.5px;color:#0000ff;height:24px;overflow:hidden">RDX</div>
<div class="t co" style="left:1831px;top:302.5px;color:#0000ff;height:24px;overflow:hidden">00007FFBF1008A30</div>
<svg style="left:2011px;top:301.5px;" width="24" height="24" viewBox="0 0 24 24"><path d="M16.600 1.800H22.300V17.400H10.400V21.200L1.600 14.500 10.400 8V12.400H16.600Z" fill="#7d8fe0" stroke="#1c1c7a" stroke-width="1.200" stroke-linejoin="miter"/></svg>
<div class="t co" style="left:2039px;top:302.5px;height:24px;overflow:hidden"><span style="color:#808000">msvcrt.dll:</span><span style="color:#000080">msvcrt<span style="position:relative;top:-2px">__</span>iob+30</span></div>
<div class="t co" style="left:1795px;top:328.5px;color:#0000ff;height:24px;overflow:hidden">RSI</div>
<div class="t co" style="left:1831px;top:328.5px;color:#0000ff;height:24px;overflow:hidden">0000000000000011</div>
<svg style="left:2011px;top:327.5px;" width="24" height="24" viewBox="0 0 24 24"><path d="M16.600 1.800H22.300V17.400H10.400V21.200L1.600 14.500 10.400 8V12.400H16.600Z" fill="#b4b4b4" stroke="#8e8e8e" stroke-width="1.200" stroke-linejoin="miter"/></svg>
<div class="t co" style="left:1795px;top:354.5px;color:#0000ff;height:24px;overflow:hidden">RDI</div>
<div class="t co" style="left:1831px;top:354.5px;color:#0000ff;height:24px;overflow:hidden">00000000006424D0</div>
<svg style="left:2011px;top:353.5px;" width="24" height="24" viewBox="0 0 24 24"><path d="M16.600 1.800H22.300V17.400H10.400V21.200L1.600 14.500 10.400 8V12.400H16.600Z" fill="#7d8fe0" stroke="#1c1c7a" stroke-width="1.200" stroke-linejoin="miter"/></svg>
<div class="t co" style="left:2039px;top:354.5px;height:24px;overflow:hidden"><span style="color:#808000">debug026:00000000006424D0</span></div>
<div class="t co" style="left:1795px;top:380.5px;color:#0000ff;height:24px;overflow:hidden">RBP</div>
<div class="t co" style="left:1831px;top:380.5px;color:#0000ff;height:24px;overflow:hidden">000000000060FCD0</div>
<svg style="left:2011px;top:379.5px;" width="24" height="24" viewBox="0 0 24 24"><path d="M16.600 1.800H22.300V17.400H10.400V21.200L1.600 14.500 10.400 8V12.400H16.600Z" fill="#7d8fe0" stroke="#1c1c7a" stroke-width="1.200" stroke-linejoin="miter"/></svg>
<div class="t co" style="left:2039px;top:380.5px;height:24px;overflow:hidden"><span style="color:#808000">Stack[00003958]:000000000060FCD0</span></div>
<div class="t co" style="left:1795px;top:406.5px;color:#0000ff;height:24px;overflow:hidden">RSP</div>
<div class="t co" style="left:1831px;top:406.5px;color:#0000ff;height:24px;overflow:hidden">000000000060FC50</div>
<svg style="left:2011px;top:405.5px;" width="24" height="24" viewBox="0 0 24 24"><path d="M16.600 1.800H22.300V17.400H10.400V21.200L1.600 14.500 10.400 8V12.400H16.600Z" fill="#7d8fe0" stroke="#1c1c7a" stroke-width="1.200" stroke-linejoin="miter"/></svg>
<div class="t co" style="left:2039px;top:406.5px;height:24px;overflow:hidden"><span style="color:#808000">Stack[00003958]:000000000060FC50</span></div>
<div class="t co" style="left:1795px;top:432.5px;color:#0000ff;height:24px;overflow:hidden">RIP</div>
<div class="t co" style="left:1831px;top:432.5px;color:#0000ff;height:24px;overflow:hidden">00000000004019DD</div>
<svg style="left:2011px;top:431.5px;" width="24" height="24" viewBox="0 0 24 24"><path d="M16.600 1.800H22.300V17.400H10.400V21.200L1.600 14.500 10.400 8V12.400H16.600Z" fill="#7d8fe0" stroke="#1c1c7a" stroke-width="1.200" stroke-linejoin="miter"/></svg>
<div class="t co" style="left:2039px;top:432.5px;height:24px;overflow:hidden"><span style="color:#0000ff">main+3C2</span></div>
<div class="t co" style="left:1795px;top:458.5px;color:#0000ff;height:19.5px;overflow:hidden">R8</div>
<div class="t co" style="left:1831px;top:458.5px;color:#0000ff;height:19.5px;overflow:hidden">00007FFBF100E7A0</div>
<svg style="left:2011px;top:457.5px;" width="24" height="24" viewBox="0 0 24 24"><path d="M16.600 1.800H22.300V17.400H10.400V21.200L1.600 14.500 10.400 8V12.400H16.600Z" fill="#7d8fe0" stroke="#1c1c7a" stroke-width="1.200" stroke-linejoin="miter"/></svg>
<div class="t co" style="left:2039px;top:458.5px;height:19.5px;overflow:hidden"><span style="color:#808000">msvcrt.dll:</span><span style="color:#000080">msvcrt<span style="position:relative;top:-3px">___</span>pioinfo</span></div>
<div style="left:2011px;top:479px;width:30px;height:4px;background:#f0f0f0;"></div>
<div style="left:2465px;top:219px;width:90px;height:260px;background:#ccffff;border:1px solid #828790;"></div>
<div style="left:2533px;top:220px;width:20px;height:258px;background:#f0f0f0;"></div>
<div style="left:2541px;top:246px;width:12px;height:134px;background:#8a8a8a;"></div>
<div class="t co" style="left:2468px;top:223px;color:#0000ff;height:23px;overflow:hidden">ID</div>
<div class="t co" style="left:2514px;top:223px;color:#0000ff;height:23px;overflow:hidden">0</div>
<div class="t co" style="left:2468px;top:246px;color:#0000ff;height:23px;overflow:hidden">VIP</div>
<div class="t co" style="left:2514px;top:246px;color:#0000ff;height:23px;overflow:hidden">0</div>
<div class="t co" style="left:2468px;top:269px;color:#0000ff;height:23px;overflow:hidden">VIF</div>
<div class="t co" style="left:2514px;top:269px;color:#0000ff;height:23px;overflow:hidden">0</div>
<div class="t co" style="left:2468px;top:292px;color:#0000ff;height:23px;overflow:hidden">AC</div>
<div class="t co" style="left:2514px;top:292px;color:#0000ff;height:23px;overflow:hidden">0</div>
<div class="t co" style="left:2468px;top:315px;color:#0000ff;height:23px;overflow:hidden">VM</div>
<div class="t co" style="left:2514px;top:315px;color:#0000ff;height:23px;overflow:hidden">0</div>
<div class="t co" style="left:2468px;top:338px;color:#0000ff;height:23px;overflow:hidden">RF</div>
<div class="t co" style="left:2514px;top:338px;color:#0000ff;height:23px;overflow:hidden">0</div>
<div class="t co" style="left:2468px;top:361px;color:#0000ff;height:23px;overflow:hidden">NT</div>
<div class="t co" style="left:2514px;top:361px;color:#0000ff;height:23px;overflow:hidden">0</div>
<div class="t co" style="left:2468px;top:384px;color:#0000ff;height:23px;overflow:hidden">IOPL</div>
<div class="t co" style="left:2514px;top:384px;color:#0000ff;height:23px;overflow:hidden">0</div>
<div class="t co" style="left:2468px;top:407px;color:#0000ff;height:23px;overflow:hidden">OF</div>
<div class="t co" style="left:2514px;top:407px;color:#0000ff;height:23px;overflow:hidden">0</div>
<div class="t co" style="left:2468px;top:430px;color:#0000ff;height:23px;overflow:hidden">DF</div>
<div class="t co" style="left:2514px;top:430px;color:#0000ff;height:23px;overflow:hidden">0</div>
<div class="t co" style="left:2468px;top:453px;color:#0000ff;height:23px;overflow:hidden">IF</div>
<div class="t co" style="left:2514px;top:453px;color:#0000ff;height:23px;overflow:hidden">1</div>
<div style="left:1792px;top:483px;width:770px;height:30px;background:#f0f0f0;border:1px solid #a0a0a0;"></div>
<svg style="left:1796px;top:489px;" width="16" height="16" viewBox="0 0 16 16"><rect x=".5" y=".5" width="15" height="15" rx="1.200" fill="#fdfdfd" stroke="#777"/><path d="M1 3.800V1H15V3.800Z" fill="#0ad4ff"/><g fill="none" stroke="#444" stroke-width=".9"><path d="M8 4.500l2.200 1.200v2.400L8 9.300 5.800 8.100V5.700zM8 6.900V9.300M5.800 5.700L8 6.900l2.200-1.200"/><path d="M5.500 9.300l2.200 1.200v2.400l-2.200 1.200-2.200-1.200v-2.400zM5.500 11.700v2.400M3.300 10.500l2.200 1.200 2.200-1.200"/><path d="M10.500 9.300l2.200 1.200v2.400l-2.200 1.200-2.200-1.200v-2.400zM10.500 11.700v2.400M8.300 10.500l2.200 1.200 2.200-1.200"/></g></svg>
<div class="t ss" style="left:1821px;top:486px;">Modules</div>
<svg style="left:2480px;top:491px;" width="72" height="16" viewBox="0 0 72 16"><rect x=".7" y=".7" width="13.600" height="13.600" fill="none" stroke="#333" stroke-width="1.400"/><rect x="0" y="0" width="15" height="4" fill="#333"/>
<g fill="none" stroke="#3c3c3c" stroke-width="1.400"><path d="M35.700 5V.7h8v7.600h-3"/><rect x="32.700" y="5.500" width="7.600" height="7.600" fill="#f0f0f0"/></g><path d="M35 0h9.400v3H35zM32 5h9v2.600h-9z" fill="#3c3c3c"/>
<path d="M60.500 2.500l9.500 9.500M70 2.500l-9.500 9.500" stroke="#333" stroke-width="2.200"/></svg>
<div style="left:1792px;top:515px;width:770px;height:224px;background:#ffffff;border:1px solid #828790;"></div>
<div style="left:2286px;top:517px;width:1px;height:36px;background:#e5e5e5;"></div>
<div style="left:2493px;top:517px;width:1px;height:36px;background:#e5e5e5;"></div>
<div class="t ui" style="left:1799px;top:523px;font-size:19px;line-height:24px;color:#000;">Path</div>
<div class="t ui" style="left:2293px;top:523px;font-size:19px;line-height:24px;color:#000;">Base</div>
<div class="t ui" style="left:2500px;top:523px;font-size:19px;line-height:24px;color:#000;">Size</div>
<svg style="left:1797px;top:553px;" width="22" height="20" viewBox="0 0 22 20"><rect x=".5" y="0" width="21" height="24" fill="#fdfdfd" stroke="#777"/><rect x="0" y="0" width="22" height="3" fill="#29c5f6"/><g transform="translate(3,3.500)"><g fill="none" stroke="#333" stroke-width="1"><path d="M8 2l3 1.600v3.200L8 8.400 5 6.800V3.600zM8 5.200v3.200M5 3.600l3 1.600 3-1.600"/><path d="M4.800 8.400l3 1.600v3.200l-3 1.600-3-1.600V10zM4.800 11.600v3.200M1.800 10l3 1.600 3-1.600"/><path d="M11.200 8.400l3 1.600v3.200l-3 1.600-3-1.600V10zM11.200 11.600v3.200M8.200 10l3 1.600 3-1.600"/></g></g></svg>
<div class="t ss" style="left:1825px;top:553px;">D:<i>\</i>下载<i>\</i>re01.exe</div>
<div class="t ss" style="left:2291px;top:553px;">0000000000400000</div>
<div class="t ss" style="left:2498px;top:553px;">0000000</div>
<svg style="left:1797px;top:573px;" width="22" height="20" viewBox="0 0 22 20"><rect x=".5" y="0" width="21" height="24" fill="#fdfdfd" stroke="#777"/><rect x="0" y="0" width="22" height="3" fill="#29c5f6"/><g transform="translate(3,3.500)"><g fill="none" stroke="#333" stroke-width="1"><path d="M8 2l3 1.600v3.200L8 8.400 5 6.800V3.600zM8 5.200v3.200M5 3.600l3 1.600 3-1.600"/><path d="M4.800 8.400l3 1.600v3.200l-3 1.600-3-1.600V10zM4.800 11.600v3.200M1.800 10l3 1.600 3-1.600"/><path d="M11.200 8.400l3 1.600v3.200l-3 1.600-3-1.600V10zM11.200 11.600v3.200M8.200 10l3 1.600 3-1.600"/></g></g></svg>
<div class="t ss" style="left:1825px;top:573px;">C:<i>\</i>WINDOWS<i>\</i>System32<i>\</i>KERNELBASE.dll</div>
<div class="t ss" style="left:2291px;top:573px;">00007FFBEE950000</div>
<div class="t ss" style="left:2498px;top:573px;">0000000</div>
<svg style="left:1797px;top:593px;" width="22" height="20" viewBox="0 0 22 20"><rect x=".5" y="0" width="21" height="24" fill="#fdfdfd" stroke="#777"/><rect x="0" y="0" width="22" height="3" fill="#29c5f6"/><g transform="translate(3,3.500)"><g fill="none" stroke="#333" stroke-width="1"><path d="M8 2l3 1.600v3.200L8 8.400 5 6.800V3.600zM8 5.200v3.200M5 3.600l3 1.600 3-1.600"/><path d="M4.800 8.400l3 1.600v3.200l-3 1.600-3-1.600V10zM4.800 11.600v3.200M1.800 10l3 1.600 3-1.600"/><path d="M11.200 8.400l3 1.600v3.200l-3 1.600-3-1.600V10zM11.200 11.600v3.200M8.200 10l3 1.600 3-1.600"/></g></g></svg>
<div class="t ss" style="left:1825px;top:593px;">C:<i>\</i>WINDOWS<i>\</i>System32<i>\</i>kernel32.dll</div>
<div class="t ss" style="left:2291px;top:593px;">00007FFBEF1A0000</div>
<div class="t ss" style="left:2498px;top:593px;">0000000</div>
<svg style="left:1797px;top:613px;" width="22" height="20" viewBox="0 0 22 20"><rect x=".5" y="0" width="21" height="24" fill="#fdfdfd" stroke="#777"/><rect x="0" y="0" width="22" height="3" fill="#29c5f6"/><g transform="translate(3,3.500)"><g fill="none" stroke="#333" stroke-width="1"><path d="M8 2l3 1.600v3.200L8 8.400 5 6.800V3.600zM8 5.200v3.200M5 3.600l3 1.600 3-1.600"/><path d="M4.800 8.400l3 1.600v3.200l-3 1.600-3-1.600V10zM4.800 11.600v3.200M1.800 10l3 1.600 3-1.600"/><path d="M11.200 8.400l3 1.600v3.200l-3 1.600-3-1.600V10zM11.200 11.600v3.200M8.200 10l3 1.600 3-1.600"/></g></g></svg>
<div class="t ss" style="left:1825px;top:613px;">C:<i>\</i>WINDOWS<i>\</i>System32<i>\</i>msvcrt.dll</div>
<div class="t ss" style="left:2291px;top:613px;">00007FFBF0F70000</div>
<div class="t ss" style="left:2498px;top:613px;">0000000</div>
<svg style="left:1797px;top:633px;" width="22" height="20" viewBox="0 0 22 20"><rect x=".5" y="0" width="21" height="24" fill="#fdfdfd" stroke="#777"/><rect x="0" y="0" width="22" height="3" fill="#29c5f6"/><g transform="translate(3,3.500)"><g fill="none" stroke="#333" stroke-width="1"><path d="M8 2l3 1.600v3.200L8 8.400 5 6.800V3.600zM8 5.200v3.200M5 3.600l3 1.600 3-1.600"/><path d="M4.800 8.400l3 1.600v3.200l-3 1.600-3-1.600V10zM4.800 11.600v3.200M1.800 10l3 1.600 3-1.600"/><path d="M11.200 8.400l3 1.600v3.200l-3 1.600-3-1.600V10zM11.200 11.600v3.200M8.200 10l3 1.600 3-1.600"/></g></g></svg>
<div class="t ss" style="left:1825px;top:633px;">C:<i>\</i>WINDOWS<i>\</i>System32<i>\</i>ntdll.dll</div>
<div class="t ss" style="left:2291px;top:633px;">00007FFBF12B0000</div>
<div class="t ss" style="left:2498px;top:633px;">0000000</div>
<div style="left:1793px;top:713px;width:768px;height:25px;background:#f0f0f0;"></div>
<div style="left:1819px;top:720px;width:601px;height:11px;background:#848484;"></div>
<div style="left:1792px;top:772px;width:770px;height:30px;background:#f0f0f0;border:1px solid #a0a0a0;"></div>
<svg style="left:1796px;top:778px;" width="16" height="16" viewBox="0 0 16 16"><rect x=".5" y=".5" width="15" height="15" rx="1.200" fill="#fdfdfd" stroke="#777"/><path d="M1 3.800V1H15V3.800Z" fill="#0ad4ff"/><circle cx="5" cy="9.500" r="2.600" fill="#111"/><path d="M5 9.500l7-3.500M5 9.500h7M5 9.500l7 3.500" stroke="#666" stroke-width=".9"/><circle cx="12.500" cy="6" r="1.100" fill="#fff" stroke="#666" stroke-width=".7"/><circle cx="12.500" cy="9.500" r="1.100" fill="#fff" stroke="#666" stroke-width=".7"/><circle cx="12.500" cy="13" r="1.100" fill="#fff" stroke="#666" stroke-width=".7"/></svg>
<div class="t ss" style="left:1821px;top:775px;">Threads</div>
<svg style="left:2480px;top:780px;" width="72" height="16" viewBox="0 0 72 16"><rect x=".7" y=".7" width="13.600" height="13.600" fill="none" stroke="#333" stroke-width="1.400"/><rect x="0" y="0" width="15" height="4" fill="#333"/>
<g fill="none" stroke="#3c3c3c" stroke-width="1.400"><path d="M35.700 5V.7h8v7.600h-3"/><rect x="32.700" y="5.500" width="7.600" height="7.600" fill="#f0f0f0"/></g><path d="M35 0h9.400v3H35zM32 5h9v2.600h-9z" fill="#3c3c3c"/>
<path d="M60.500 2.500l9.500 9.500M70 2.500l-9.500 9.500" stroke="#333" stroke-width="2.200"/></svg>
<div style="left:1792px;top:804px;width:770px;height:253px;background:#ffffff;border:1px solid #828790;"></div>
<div style="left:1879px;top:806px;width:1px;height:36px;background:#e5e5e5;"></div>
<div style="left:1942px;top:806px;width:1px;height:36px;background:#e5e5e5;"></div>
<div style="left:2065px;top:806px;width:1px;height:36px;background:#e5e5e5;"></div>
<div class="t ui" style="left:1799px;top:812px;font-size:19px;line-height:24px;color:#000;">Decimal</div>
<div class="t ui" style="left:1886px;top:812px;font-size:19px;line-height:24px;color:#000;">Hex</div>
<div class="t ui" style="left:1949px;top:812px;font-size:19px;line-height:24px;color:#000;">State</div>
<div class="t ui" style="left:2072px;top:812px;font-size:19px;line-height:24px;color:#000;">Name</div>
<svg style="left:1797px;top:842px;" width="22" height="20" viewBox="0 0 22 20"><rect x=".5" y="0" width="21" height="24" fill="#fdfdfd" stroke="#777"/><rect x="0" y="0" width="22" height="3" fill="#29c5f6"/><g transform="translate(3,3.500)"><circle cx="4.500" cy="8" r="3.200" fill="#111"/><path d="M5 8l9-5M5 8l9-1.700M5 8l9 1.700M5 8l9 5" stroke="#555" stroke-width=".9"/><g fill="#fff" stroke="#555" stroke-width=".7"><circle cx="14.500" cy="3" r="1.300"/><circle cx="14.500" cy="6.300" r="1.300"/><circle cx="14.500" cy="9.700" r="1.300"/><circle cx="14.500" cy="13" r="1.300"/></g></g></svg>
<svg style="left:1797px;top:862px;" width="22" height="20" viewBox="0 0 22 20"><rect x=".5" y="0" width="21" height="24" fill="#fdfdfd" stroke="#777"/><rect x="0" y="0" width="22" height="3" fill="#29c5f6"/><g transform="translate(3,3.500)"><circle cx="4.500" cy="8" r="3.200" fill="#111"/><path d="M5 8l9-5M5 8l9-1.700M5 8l9 1.700M5 8l9 5" stroke="#555" stroke-width=".9"/><g fill="#fff" stroke="#555" stroke-width=".7"><circle cx="14.500" cy="3" r="1.300"/><circle cx="14.500" cy="6.300" r="1.300"/><circle cx="14.500" cy="9.700" r="1.300"/><circle cx="14.500" cy="13" r="1.300"/></g></g></svg>
<div class="t ss" style="left:1826px;top:841px;font-weight:bold;letter-spacing:1px;">14680</div>
<div class="t ss" style="left:1883px;top:841px;font-weight:bold;letter-spacing:1px;">3958</div>
<div class="t ss" style="left:1945px;top:841px;font-weight:bold;letter-spacing:1px;">Ready</div>
<div class="t ss" style="left:2069px;top:841px;font-weight:bold;letter-spacing:1px;">re01.exe</div>
<div class="t ss" style="left:1826px;top:861px;">27980</div>
<div class="t ss" style="left:1883px;top:861px;">6D4C</div>
<div class="t ss" style="left:1945px;top:861px;">Ready</div>
<div class="t ss" style="left:2069px;top:861px;">7FFBF12E5580</div>
<div style="left:0px;top:1061px;width:1583px;height:30px;background:#f0f0f0;border:1px solid #a0a0a0;"></div>
<svg style="left:4px;top:1067px;" width="16" height="16" viewBox="0 0 16 16"><rect x=".5" y=".5" width="15" height="15" rx="1.200" fill="#fdfdfd" stroke="#777"/><path d="M1 3.800V1H15V3.800Z" fill="#0ad4ff"/><circle cx="8" cy="9.500" r="4.600" fill="#fff" stroke="#333" stroke-width="1.300"/><path d="M4 12a4.500 4.500 0 0 1 8 0" fill="none" stroke="#333" stroke-width="1.200"/><circle cx="8" cy="11" r="2" fill="#2fc064"/></svg>
<div class="t ss" style="left:29px;top:1064px;">Hex View-1</div>
<svg style="left:1503px;top:1069px;" width="72" height="16" viewBox="0 0 72 16"><rect x=".7" y=".7" width="13.600" height="13.600" fill="none" stroke="#333" stroke-width="1.400"/><rect x="0" y="0" width="15" height="4" fill="#333"/>
<g fill="none" stroke="#3c3c3c" stroke-width="1.400"><path d="M35.700 5V.7h8v7.600h-3"/><rect x="32.700" y="5.500" width="7.600" height="7.600" fill="#f0f0f0"/></g><path d="M35 0h9.400v3H35zM32 5h9v2.600h-9z" fill="#3c3c3c"/>
<path d="M60.500 2.500l9.500 9.500M70 2.500l-9.500 9.500" stroke="#333" stroke-width="2.200"/></svg>
<div style="left:1px;top:1093px;width:1555px;height:84px;background:#ccffff;"></div>
<div style="left:1px;top:1140px;width:1555px;height:23px;background:#b8e4e4;"></div>
<div style="left:1564px;top:1121px;width:11px;height:26px;background:#8a8a8a;"></div>
<div style="left:199px;top:1140px;width:55px;height:23px;background:#047c04;"></div>
<div style="left:672px;top:1117px;width:55px;height:23px;background:#047c04;"></div>
<div class="t co" style="left:0.6px;top:1095px;height:23px;overflow:hidden"><span style="color:#808080">00000000004015F0</span>  <span style="color:#008000">F7 48 8B 55 10 48 8B 45  F8 48 01 C2 0F B6 45 F7</span>  <span style="color:#0000ff">.....H.E.H....E.</span></div>
<div class="t co" style="left:0.6px;top:1118px;height:23px;overflow:hidden"><span style="color:#808080">0000000000401600</span>  <span style="color:#008000">32 45 20 88 02 48 83 45  F8 01 48 8B 45 F8 <span style="color:#fff">48 3B</span></span>  <span style="color:#0000ff">2E·..H.E..H.E.H;</span></div>
<div class="t co" style="left:0.6px;top:1141px;height:23px;overflow:hidden"><span style="color:#0000ff">0000000000401610</span>  <span style="color:#008000"><span style="color:#fff">45 18</span> 72 C2 90 48 83 C4  30 5D C3 55 48 81 EC D0</span>  <span style="color:#0000ff">E.r..H...]..H...</span></div>
<div class="t co" style="left:0.6px;top:1164px;height:13px;overflow:hidden"><span style="color:#808080">0000000000401620</span>  <span style="color:#008000">01 00 00 48 8D AC 24 80  00 00 00 E8 E0 04 00 00</span>  <span style="color:#0000ff">...H..$.........</span></div>
<div class="t cr" style="left:4px;top:1180px;">00000A10</div>
<div style="left:92px;top:1180px;width:1px;height:21px;background:#d8d8d8;"></div>
<div class="t cr" style="left:98px;top:1180px;">0000000000401610: sub_4015B6+5A</div>
<div style="left:439px;top:1180px;width:1px;height:21px;background:#d8d8d8;"></div>
<div style="left:456px;top:1180px;width:1px;height:21px;background:#d8d8d8;"></div>
<div style="left:0px;top:1202px;width:1583px;height:1px;background:#a0a0a0;"></div>
<div style="left:0px;top:1091px;width:1px;height:112px;background:#a0a0a0;"></div>
<div style="left:1587px;top:1061px;width:980px;height:30px;background:#f0f0f0;border:1px solid #a0a0a0;"></div>
<svg style="left:1591px;top:1067px;" width="16" height="16" viewBox="0 0 16 16"><rect x=".5" y=".5" width="15" height="15" rx="1.200" fill="#fdfdfd" stroke="#777"/><path d="M1 3.800V1H15V3.800Z" fill="#0ad4ff"/><circle cx="8" cy="9.500" r="4.600" fill="#fff" stroke="#333" stroke-width="1.300"/><path d="M4 12a4.500 4.500 0 0 1 8 0" fill="none" stroke="#333" stroke-width="1.200"/><circle cx="8" cy="11" r="2" fill="#2fc064"/></svg>
<div class="t ss" style="left:1616px;top:1064px;">Stack view</div>
<svg style="left:2480px;top:1069px;" width="72" height="16" viewBox="0 0 72 16"><rect x=".7" y=".7" width="13.600" height="13.600" fill="none" stroke="#333" stroke-width="1.400"/><rect x="0" y="0" width="15" height="4" fill="#333"/>
<g fill="none" stroke="#3c3c3c" stroke-width="1.400"><path d="M35.700 5V.7h8v7.600h-3"/><rect x="32.700" y="5.500" width="7.600" height="7.600" fill="#f0f0f0"/></g><path d="M35 0h9.400v3H35zM32 5h9v2.600h-9z" fill="#3c3c3c"/>
<path d="M60.500 2.500l9.500 9.500M70 2.500l-9.500 9.500" stroke="#333" stroke-width="2.200"/></svg>
<div style="left:1588px;top:1093px;width:945px;height:84px;background:#ccffff;"></div>
<div style="left:1588px;top:1094px;width:945px;height:23px;background:#66d5f0;"></div>
<div style="left:2541px;top:1120px;width:12px;height:27px;background:#8a8a8a;"></div>
<div class="t co" style="left:1588.6px;top:1095px;height:23px;overflow:hidden"><span style="color:#0000ff">000000000060FC50</span>  <span style="color:#008000">0000000000405016</span>  <span style="color:#808080">.rdata:</span><span style="color:#000080">Format</span></div>
<div class="t co" style="left:1588.6px;top:1118px;height:23px;overflow:hidden"><span style="color:#808080">000000000060FC58</span>  <span style="color:#008000">000000000060FB90</span>  <span style="color:#808080">Stack[00003958]:000000000060FB90</span></div>
<div class="t co" style="left:1588.6px;top:1141px;height:23px;overflow:hidden"><span style="color:#808080">000000000060FC60</span>  <span style="color:#008000">000000000060F890</span>  <span style="color:#808080">Stack[00003958]:000000000060F890</span></div>
<div class="t co" style="left:1588.6px;top:1164px;height:13px;overflow:hidden"><span style="color:#808080">000000000060FC68</span>  <span style="color:#008000">000000000060F890</span>  <span style="color:#808080">Stack[00003958]:000000000060F890</span></div>
<div class="t cr" style="left:1590px;top:1180px;">UNKNOWN</div>
<div style="left:1668px;top:1180px;width:1px;height:21px;background:#d8d8d8;"></div>
<div class="t cr" style="left:1674px;top:1180px;">000000000060FC50: Stack[00003958]:000000000060FC50</div>
<div style="left:2224px;top:1180px;width:1px;height:21px;background:#d8d8d8;"></div>
<div class="t cr" style="left:2230px;top:1180px;">(Synchronized with RSP)</div>
<div style="left:2483px;top:1180px;width:1px;height:21px;background:#d8d8d8;"></div>
<div style="left:1587px;top:1202px;width:980px;height:1px;background:#a0a0a0;"></div>
<div style="left:1587px;top:1091px;width:1px;height:112px;background:#a0a0a0;"></div>
<div style="left:0px;top:1207px;width:2565px;height:30px;background:#f0f0f0;border:1px solid #a0a0a0;"></div>
<svg style="left:4px;top:1213px;" width="16" height="16" viewBox="0 0 16 16"><rect x=".5" y=".5" width="15" height="15" rx="1.200" fill="#fdfdfd" stroke="#777"/><path d="M1 3.800V1H15V3.800Z" fill="#0ad4ff"/><rect x="2.500" y="4.800" width="11" height="9.700" rx="1.500" fill="#c9c9c9"/><path d="M7.200 6.300h4M7.200 8.400h4M7.200 10.500h4M7.200 12.600h4" stroke="#161616" stroke-width="1.100"/><path d="M4.700 6.300h1.300M4.700 8.400h1.300M4.700 10.500h1.300M4.700 12.600h1.300" stroke="#1a7acc" stroke-width="1.200"/></svg>
<div class="t ss" style="left:29px;top:1210px;">Output</div>
<svg style="left:2480px;top:1215px;" width="72" height="16" viewBox="0 0 72 16"><rect x=".7" y=".7" width="13.600" height="13.600" fill="none" stroke="#333" stroke-width="1.400"/><rect x="0" y="0" width="15" height="4" fill="#333"/>
<g fill="none" stroke="#3c3c3c" stroke-width="1.400"><path d="M35.700 5V.7h8v7.600h-3"/><rect x="32.700" y="5.500" width="7.600" height="7.600" fill="#f0f0f0"/></g><path d="M35 0h9.400v3H35zM32 5h9v2.600h-9z" fill="#3c3c3c"/>
<path d="M60.500 2.500l9.500 9.500M70 2.500l-9.500 9.500" stroke="#333" stroke-width="2.200"/></svg>
<div style="left:46px;top:63px;width:326px;height:717px;background:#f0f0f0;border:4px solid #f9f9f9;box-shadow:3px 3px 4px rgba(0,0,0,.5);"></div>
<div style="left:84px;top:67px;width:3px;height:709px;background:#f7f7f7;"></div>
<div style="left:50px;top:262px;width:317px;height:31px;background:#91c9f7;"></div>
<div style="left:87px;top:257px;width:280px;height:1px;background:#d7d7d7;"></div>
<div style="left:87px;top:258px;width:280px;height:1px;background:#fbfbfb;"></div>
<div style="left:87px;top:297px;width:280px;height:1px;background:#d7d7d7;"></div>
<div style="left:87px;top:298px;width:280px;height:1px;background:#fbfbfb;"></div>
<div style="left:87px;top:523px;width:280px;height:1px;background:#d7d7d7;"></div>
<div style="left:87px;top:524px;width:280px;height:1px;background:#fbfbfb;"></div>
<div class="t ui" style="left:91px;top:70.5px;font-size:19.5px;line-height:24px;color:#000;">Copy</div>
<div class="t ui" style="left:254px;top:70.5px;font-size:19.5px;line-height:24px;color:#000;">Ctrl+C</div>
<div class="t ui" style="left:91px;top:101.5px;font-size:19.5px;line-height:24px;color:#000;">Abort selection</div>
<div class="t ui" style="left:91px;top:132.5px;font-size:19.5px;line-height:24px;color:#000;">Select all</div>
<div class="t ui" style="left:254px;top:132.5px;font-size:19.5px;line-height:24px;color:#000;">Ctrl+A</div>
<div class="t ui" style="left:91px;top:163.5px;font-size:19.5px;line-height:24px;color:#000;">Select identifier</div>
<div class="t ui" style="left:91px;top:194.5px;font-size:19.5px;line-height:24px;color:#6d6d6d;">Undo</div>
<div class="t ui" style="left:254px;top:194.5px;font-size:19.5px;line-height:24px;color:#6d6d6d;">Ctrl+Z</div>
<div class="t ui" style="left:91px;top:225.5px;font-size:19.5px;line-height:24px;color:#6d6d6d;">Redo</div>
<div class="t ui" style="left:254px;top:225.5px;font-size:19.5px;line-height:24px;color:#6d6d6d;">Ctrl+Y</div>
<div class="t ui" style="left:91px;top:265.5px;font-size:19.5px;line-height:24px;color:#000;">Export data</div>
<div class="t ui" style="left:91px;top:305.5px;font-size:19.5px;line-height:24px;color:#000;">Code</div>
<div class="t ui" style="left:254px;top:305.5px;font-size:19.5px;line-height:24px;color:#000;">C</div>
<div class="t ui" style="left:91px;top:336.5px;font-size:19.5px;line-height:24px;color:#000;">Data</div>
<div class="t ui" style="left:254px;top:336.5px;font-size:19.5px;line-height:24px;color:#000;">D</div>
<div class="t ui" style="left:91px;top:367.5px;font-size:19.5px;line-height:24px;color:#000;">Struct var...</div>
<div class="t ui" style="left:91px;top:398.5px;font-size:19.5px;line-height:24px;color:#000;">Strings</div>
<svg style="left:348.5px;top:404.0px;" width="6" height="11" viewBox="0 0 6 11"><path d="M.3 .3v10.200L5.800 5.400z" fill="#000"/></svg>
<div class="t ui" style="left:91px;top:429.5px;font-size:19.5px;line-height:24px;color:#000;">Array...</div>
<div class="t ui" style="left:254px;top:429.5px;font-size:19.5px;line-height:24px;color:#000;">Numpad+*</div>
<div class="t ui" style="left:91px;top:460.5px;font-size:19.5px;line-height:24px;color:#000;">Undefine</div>
<div class="t ui" style="left:254px;top:460.5px;font-size:19.5px;line-height:24px;color:#000;">U</div>
<div class="t ui" style="left:91px;top:491.5px;font-size:19.5px;line-height:24px;color:#000;">Rename</div>
<div class="t ui" style="left:254px;top:491.5px;font-size:19.5px;line-height:24px;color:#000;">N</div>
<div class="t ui" style="left:91px;top:531.5px;font-size:19.5px;line-height:24px;color:#000;">Operand type</div>
<svg style="left:348.5px;top:537.0px;" width="6" height="11" viewBox="0 0 6 11"><path d="M.3 .3v10.200L5.800 5.400z" fill="#000"/></svg>
<div class="t ui" style="left:91px;top:562.5px;font-size:19.5px;line-height:24px;color:#000;">Comments</div>
<svg style="left:348.5px;top:568.0px;" width="6" height="11" viewBox="0 0 6 11"><path d="M.3 .3v10.200L5.800 5.400z" fill="#000"/></svg>
<div class="t ui" style="left:91px;top:593.5px;font-size:19.5px;line-height:24px;color:#000;">Segments</div>
<svg style="left:348.5px;top:599.0px;" width="6" height="11" viewBox="0 0 6 11"><path d="M.3 .3v10.200L5.800 5.400z" fill="#000"/></svg>
<div class="t ui" style="left:91px;top:624.5px;font-size:19.5px;line-height:24px;color:#000;">Structs</div>
<svg style="left:348.5px;top:630.0px;" width="6" height="11" viewBox="0 0 6 11"><path d="M.3 .3v10.200L5.800 5.400z" fill="#000"/></svg>
<div class="t ui" style="left:91px;top:655.5px;font-size:19.5px;line-height:24px;color:#000;">Functions</div>
<svg style="left:348.5px;top:661.0px;" width="6" height="11" viewBox="0 0 6 11"><path d="M.3 .3v10.200L5.800 5.400z" fill="#000"/></svg>
<div class="t ui" style="left:91px;top:686.5px;font-size:19.5px;line-height:24px;color:#000;">Patch program</div>
<svg style="left:348.5px;top:692.0px;" width="6" height="11" viewBox="0 0 6 11"><path d="M.3 .3v10.200L5.800 5.400z" fill="#000"/></svg>
<div class="t ui" style="left:91px;top:717.5px;font-size:19.5px;line-height:24px;color:#000;">Other</div>
<svg style="left:348.5px;top:723.0px;" width="6" height="11" viewBox="0 0 6 11"><path d="M.3 .3v10.200L5.800 5.400z" fill="#000"/></svg>
<div class="t ui" style="left:91px;top:748.5px;font-size:19.5px;line-height:24px;color:#000;">Plugins</div>
<svg style="left:348.5px;top:754.0px;" width="6" height="11" viewBox="0 0 6 11"><path d="M.3 .3v10.200L5.800 5.400z" fill="#000"/></svg>
<svg style="left:54px;top:71px;" width="24" height="24" viewBox="0 0 24 24"><rect x="1.300" y="8.700" width="14.500" height="14" fill="#f2f2f2" stroke="#8a8a8a" stroke-width="1.200"/><rect x="9.200" y="1.500" width="14" height="14.200" fill="#00ccc0" stroke="#3a3a3a" stroke-width="1.100"/></svg>
<svg style="left:54px;top:306px;" width="24" height="24" viewBox="0 0 24 24"><path d="M7 1.500H19V9.500H15.500V6H12V18H15.500V15H19V22H7Q5.500 22 5.500 20.500V3Q5.500 1.500 7 1.500Z" fill="#55aaf5" stroke="#1a1a1a" stroke-width="1.700" stroke-linejoin="round"/><path d="M18.2 15.500h3v2.700h2.700v3h-2.700v2.700h-3v-2.700h-2.700v-3h2.700z" fill="#4fe09a" stroke="#2a9a60" stroke-width=".7"/></svg>
<svg style="left:54px;top:337px;" width="24" height="24" viewBox="0 0 24 24"><path d="M4 2.500H14Q19.500 2.500 19.500 8V16.500Q19.500 22 14 22H4V19H6V5.500H4Z" fill="#c4c4c4" stroke="#1a1a1a" stroke-width="1.700" stroke-linejoin="round"/><rect x="10" y="6.500" width="4" height="11.500" fill="#e6e6e6" stroke="#1a1a1a" stroke-width="1.300"/><path d="M18.2 15.500h3v2.700h2.700v3h-2.700v2.700h-3v-2.700h-2.700v-3h2.700z" fill="#4fe09a" stroke="#2a9a60" stroke-width=".7"/></svg>
<svg style="left:54px;top:368px;" width="24" height="24" viewBox="0 0 24 24"><g fill="none" stroke-linejoin="round"><path id="sb" d="M10.500 2.500H7.500Q5.750 2.500 5.750 4.200V9.500L2.500 12 5.750 14.500V19.800Q5.750 21.500 7.500 21.500H10.500M13.500 2.500H16.500Q18.250 2.500 18.250 4.200V9.500L21.500 12 18.250 14.500V19.800Q18.250 21.500 16.500 21.500H13.500" stroke="#1a1a1a" stroke-width="4.600" stroke-linecap="square"/><path d="M10.500 2.500H7.500Q5.750 2.500 5.750 4.200V9.500L2.500 12 5.750 14.500V19.800Q5.750 21.500 7.500 21.500H10.500M13.500 2.500H16.500Q18.250 2.500 18.250 4.200V9.500L21.500 12 18.250 14.500V19.800Q18.250 21.500 16.500 21.500H13.500" stroke="#ffe81a" stroke-width="2.200"/></g><path d="M18.2 15.500h3v2.700h2.700v3h-2.700v2.700h-3v-2.700h-2.700v-3h2.700z" fill="#4fe09a" stroke="#2a9a60" stroke-width=".7"/></svg>
<svg style="left:54px;top:399px;" width="24" height="24" viewBox="0 0 24 24"><path d="M6.300 1.800H17.700L23.400 11.800 17.700 21.800H6.300L.6 11.800Z" fill="#0a5a32"/><path d="M15.400 9.200A4.300 4.300 0 1 0 15.400 14.400" fill="none" stroke="#6bf0a0" stroke-width="2.900"/></svg>
<svg style="left:54px;top:430px;" width="24" height="24" viewBox="0 0 24 24"><rect x="6.800" y="5.600" width="11" height="12.600" fill="#f6f6f6"/><path d="M1 1.500H10.800V5.600H6.800V18.200H10.800V22.200H1ZM23 1.500H13.800V5.600H17.800V18.200H13.800V22.200H23Z" fill="#f5304c" stroke="#3a1a1e" stroke-width="1.300"/><path d="M18.2 15.500h3v2.700h2.700v3h-2.700v2.700h-3v-2.700h-2.700v-3h2.700z" fill="#4fe09a" stroke="#2a9a60" stroke-width=".7"/></svg>
<svg style="left:54px;top:461px;" width="24" height="24" viewBox="0 0 24 24"><path d="M12 1L23 12 12 23 1 12Z" fill="#f5304c"/><rect x="7.600" y="10" width="9.200" height="3.900" fill="#f4f4f4"/></svg>
<svg style="left:54px;top:492px;" width="24" height="24" viewBox="0 0 24 24"><rect x="1" y="10.300" width="22" height="9.900" fill="#222"/><rect x="10" y="13.700" width="10.200" height="3.700" fill="#fafafa"/><path d="M24 14.300V23.700H16.200Z" fill="#19b5f0"/><path d="M4.300 17.700L5.600 13.400 15.600 3.400 18.400 6.200 8.400 16.200Z" fill="#f5c04a" stroke="#222" stroke-width="1"/><path d="M15.600 3.400L17.200 1.800Q18.700 .8 20 2.200 21.300 3.600 20 4.600L18.400 6.200Z" fill="#f0c8b0" stroke="#222" stroke-width=".9"/></svg>
</body></html>
